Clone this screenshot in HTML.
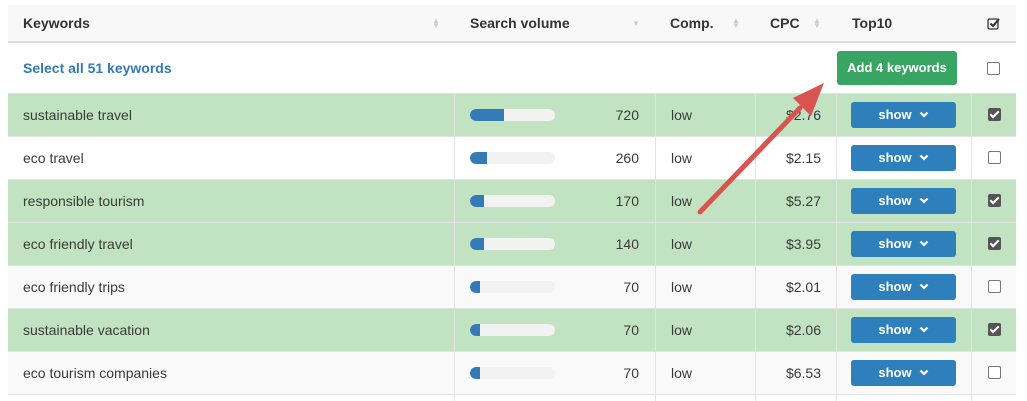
<!DOCTYPE html>
<html style="overflow:hidden;height:401px"><head><style>
*{box-sizing:border-box;margin:0;padding:0}
body{width:1027px;height:401px;background:#fff;font-family:"Liberation Sans",Arial,sans-serif;font-size:14px;color:#3a3a3a;position:relative;overflow:hidden}
.r{position:absolute;left:8px;width:1008px;height:43px;border-bottom:1px solid #e3e3e3}
.c{position:absolute;top:0;height:42px;line-height:42px}
.v{border-left:1px solid #e3e3e3}
.g{background:#c1e3c1}
.w{background:#fff}
.l{background:#f9f9f9}
.bar{position:absolute;left:15px;top:15px;width:85px;height:12px;border-radius:6px;background:#f2f2f2;overflow:hidden}
.bar i{display:block;height:12px;background:#337ab7;border-radius:6px 0 0 6px}
.btn{position:absolute;left:14px;top:8px;width:105px;height:26px;line-height:26px;background:#2e80bd;border-radius:3px;color:#fff;font-weight:bold;font-size:13px;text-align:center}
.btn svg{vertical-align:middle;margin-left:7px;margin-top:-3px}
.cb{position:absolute;left:16px;top:14px;width:13px;height:13px;border:1px solid #777;border-radius:2px;background:#fff}
.cb.on{background:#555;border-color:#555}
.cb.on:after{content:"";position:absolute;left:3px;top:0px;width:3px;height:7px;border:solid #fff;border-width:0 2px 2px 0;transform:rotate(45deg)}
.h{font-weight:bold;color:#333}
.s{position:absolute;color:#ccc;font-size:8px;line-height:5px}
</style></head><body>
<div style="position:absolute;left:8px;top:5px;width:1008px;height:38px;background:#f8f8f8;border-bottom:2px solid #ddd">
<div class="c h" style="left:15px;height:36px;line-height:36px">Keywords</div>
<div class="s" style="left:424px;top:13px">▲<br>▼</div>
<div class="c h" style="left:462px;height:36px;line-height:36px">Search volume</div>
<div class="s" style="left:624px;top:16px">▼</div>
<div class="c h" style="left:662px;height:36px;line-height:36px">Comp.</div>
<div class="s" style="left:724px;top:13px">▲<br>▼</div>
<div class="c h" style="left:762px;height:36px;line-height:36px">CPC</div>
<div class="s" style="left:805px;top:13px">▲<br>▼</div>
<div class="c h" style="left:844px;height:36px;line-height:36px">Top10</div>
<svg style="position:absolute;left:979px;top:12px" width="14" height="13"><rect x="1" y="2" width="10" height="10" rx="1.5" fill="none" stroke="#333" stroke-width="1.3"/><path d="M3.5 6.5 L6 9 L12 2" fill="none" stroke="#333" stroke-width="2"/></svg>
</div>
<div class="r w" style="top:43px;height:51px">
<div class="c" style="left:15px;height:50px;line-height:50px;color:#337ab7;font-weight:bold">Select all 51 keywords</div>
<div style="position:absolute;left:829px;top:8px;width:120px;height:34px;line-height:34px;background:#38a564;border-radius:3px;color:#fff;font-weight:bold;font-size:13px;text-align:center">Add 4 keywords</div>
<div class="cb" style="left:979px;top:19px"></div>
</div>

<div class="r g" style="top:94px"><div class="c" style="left:15px">sustainable travel</div><div class="c v" style="left:446px;width:201px"><div class="bar"><i style="width:34px"></i></div><span style="position:absolute;right:16px">720</span></div><div class="c v" style="left:647px;width:100px;padding-left:15px">low</div><div class="c v" style="left:747px;width:81px;text-align:right;padding-right:15px">$2.76</div><div class="c v" style="left:828px;width:135px"><div class="btn">show<svg width="10" height="7"><path d="M1.5 1.5 L5 5 L8.5 1.5" fill="none" stroke="#fff" stroke-width="2.2"/></svg></div></div><div class="c v" style="left:963px;width:45px"><div class="cb on"></div></div></div>
<div class="r w" style="top:137px"><div class="c" style="left:15px">eco travel</div><div class="c v" style="left:446px;width:201px"><div class="bar"><i style="width:17px"></i></div><span style="position:absolute;right:16px">260</span></div><div class="c v" style="left:647px;width:100px;padding-left:15px">low</div><div class="c v" style="left:747px;width:81px;text-align:right;padding-right:15px">$2.15</div><div class="c v" style="left:828px;width:135px"><div class="btn">show<svg width="10" height="7"><path d="M1.5 1.5 L5 5 L8.5 1.5" fill="none" stroke="#fff" stroke-width="2.2"/></svg></div></div><div class="c v" style="left:963px;width:45px"><div class="cb"></div></div></div>
<div class="r g" style="top:180px"><div class="c" style="left:15px">responsible tourism</div><div class="c v" style="left:446px;width:201px"><div class="bar"><i style="width:14px"></i></div><span style="position:absolute;right:16px">170</span></div><div class="c v" style="left:647px;width:100px;padding-left:15px">low</div><div class="c v" style="left:747px;width:81px;text-align:right;padding-right:15px">$5.27</div><div class="c v" style="left:828px;width:135px"><div class="btn">show<svg width="10" height="7"><path d="M1.5 1.5 L5 5 L8.5 1.5" fill="none" stroke="#fff" stroke-width="2.2"/></svg></div></div><div class="c v" style="left:963px;width:45px"><div class="cb on"></div></div></div>
<div class="r g" style="top:223px"><div class="c" style="left:15px">eco friendly travel</div><div class="c v" style="left:446px;width:201px"><div class="bar"><i style="width:14px"></i></div><span style="position:absolute;right:16px">140</span></div><div class="c v" style="left:647px;width:100px;padding-left:15px">low</div><div class="c v" style="left:747px;width:81px;text-align:right;padding-right:15px">$3.95</div><div class="c v" style="left:828px;width:135px"><div class="btn">show<svg width="10" height="7"><path d="M1.5 1.5 L5 5 L8.5 1.5" fill="none" stroke="#fff" stroke-width="2.2"/></svg></div></div><div class="c v" style="left:963px;width:45px"><div class="cb on"></div></div></div>
<div class="r l" style="top:266px"><div class="c" style="left:15px">eco friendly trips</div><div class="c v" style="left:446px;width:201px"><div class="bar"><i style="width:10px"></i></div><span style="position:absolute;right:16px">70</span></div><div class="c v" style="left:647px;width:100px;padding-left:15px">low</div><div class="c v" style="left:747px;width:81px;text-align:right;padding-right:15px">$2.01</div><div class="c v" style="left:828px;width:135px"><div class="btn">show<svg width="10" height="7"><path d="M1.5 1.5 L5 5 L8.5 1.5" fill="none" stroke="#fff" stroke-width="2.2"/></svg></div></div><div class="c v" style="left:963px;width:45px"><div class="cb"></div></div></div>
<div class="r g" style="top:309px"><div class="c" style="left:15px">sustainable vacation</div><div class="c v" style="left:446px;width:201px"><div class="bar"><i style="width:10px"></i></div><span style="position:absolute;right:16px">70</span></div><div class="c v" style="left:647px;width:100px;padding-left:15px">low</div><div class="c v" style="left:747px;width:81px;text-align:right;padding-right:15px">$2.06</div><div class="c v" style="left:828px;width:135px"><div class="btn">show<svg width="10" height="7"><path d="M1.5 1.5 L5 5 L8.5 1.5" fill="none" stroke="#fff" stroke-width="2.2"/></svg></div></div><div class="c v" style="left:963px;width:45px"><div class="cb on"></div></div></div>
<div class="r l" style="top:352px"><div class="c" style="left:15px">eco tourism companies</div><div class="c v" style="left:446px;width:201px"><div class="bar"><i style="width:10px"></i></div><span style="position:absolute;right:16px">70</span></div><div class="c v" style="left:647px;width:100px;padding-left:15px">low</div><div class="c v" style="left:747px;width:81px;text-align:right;padding-right:15px">$6.53</div><div class="c v" style="left:828px;width:135px"><div class="btn">show<svg width="10" height="7"><path d="M1.5 1.5 L5 5 L8.5 1.5" fill="none" stroke="#fff" stroke-width="2.2"/></svg></div></div><div class="c v" style="left:963px;width:45px"><div class="cb"></div></div></div>
<div style="position:absolute;left:454px;top:395px;width:1px;height:6px;background:#e3e3e3"></div>
<div style="position:absolute;left:655px;top:395px;width:1px;height:6px;background:#e3e3e3"></div>
<div style="position:absolute;left:755px;top:395px;width:1px;height:6px;background:#e3e3e3"></div>
<div style="position:absolute;left:836px;top:395px;width:1px;height:6px;background:#e3e3e3"></div>
<div style="position:absolute;left:971px;top:395px;width:1px;height:6px;background:#e3e3e3"></div>

<svg style="position:absolute;left:0;top:0" width="1027" height="401">
<line x1="700" y1="212" x2="800" y2="108" stroke="#d9534f" stroke-width="5" stroke-linecap="round"/>
<polygon points="824,83 793,98 811,116" fill="#d9534f"/>
</svg>
</body></html>
